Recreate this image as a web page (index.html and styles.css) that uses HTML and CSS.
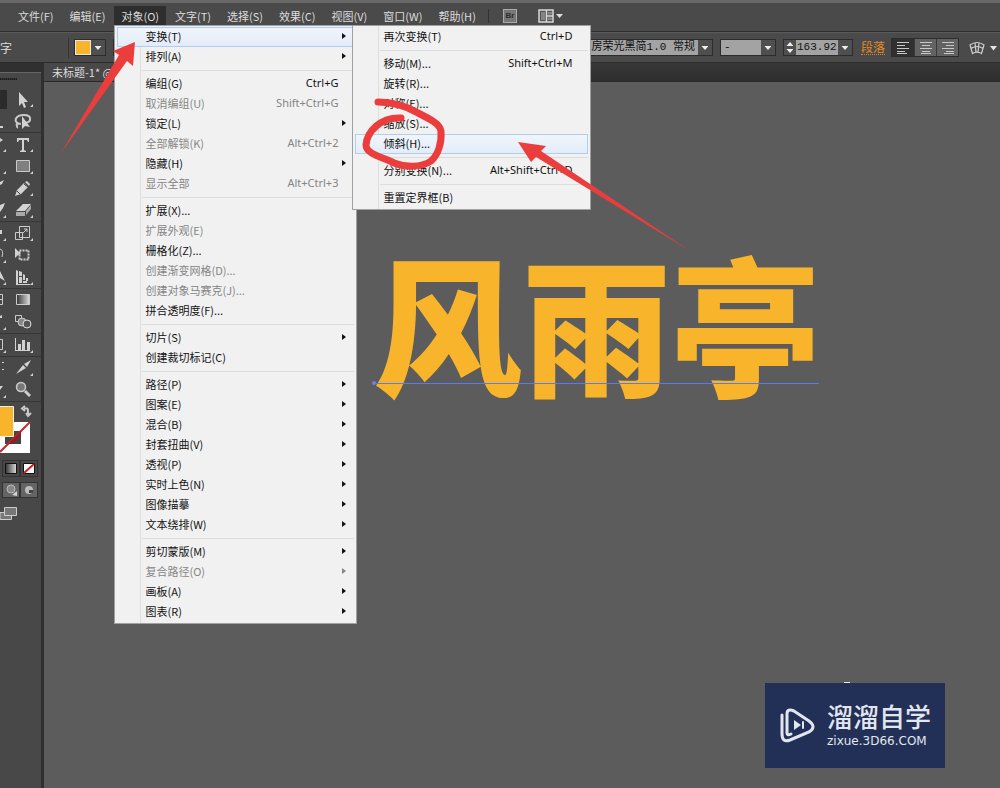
FILE: index.html
```html
<!DOCTYPE html>
<html lang="zh-CN">
<head>
<meta charset="utf-8">
<title>未标题-1</title>
<link rel="stylesheet" href="styles.css">
</head>
<body>
<header class="menubar">
  <nav class="menus">
    <button>文件(F)</button><button>编辑(E)</button>
    <div class="menu-root">
      <button class="open">对象(O)</button>
      <div class="menu object-menu">
        <button class="item active">变换(T)<i class="sub"></i></button>
        <button class="item">排列(A)<i class="sub"></i></button>
        <hr>
        <button class="item">编组(G)<kbd>Ctrl+G</kbd></button>
        <button class="item" disabled>取消编组(U)<kbd>Shift+Ctrl+G</kbd></button>
        <button class="item">锁定(L)<i class="sub"></i></button>
        <button class="item" disabled>全部解锁(K)<kbd>Alt+Ctrl+2</kbd></button>
        <button class="item">隐藏(H)<i class="sub"></i></button>
        <button class="item" disabled>显示全部<kbd>Alt+Ctrl+3</kbd></button>
        <hr>
        <button class="item">扩展(X)...</button>
        <button class="item" disabled>扩展外观(E)</button>
        <button class="item">栅格化(Z)...</button>
        <button class="item" disabled>创建渐变网格(D)...</button>
        <button class="item" disabled>创建对象马赛克(J)...</button>
        <button class="item">拼合透明度(F)...</button>
        <hr>
        <button class="item">切片(S)<i class="sub"></i></button>
        <button class="item">创建裁切标记(C)</button>
        <hr>
        <button class="item">路径(P)<i class="sub"></i></button>
        <button class="item">图案(E)<i class="sub"></i></button>
        <button class="item">混合(B)<i class="sub"></i></button>
        <button class="item">封套扭曲(V)<i class="sub"></i></button>
        <button class="item">透视(P)<i class="sub"></i></button>
        <button class="item">实时上色(N)<i class="sub"></i></button>
        <button class="item">图像描摹<i class="sub"></i></button>
        <button class="item">文本绕排(W)<i class="sub"></i></button>
        <hr>
        <button class="item">剪切蒙版(M)<i class="sub"></i></button>
        <button class="item" disabled>复合路径(O)<i class="sub"></i></button>
        <button class="item">画板(A)<i class="sub"></i></button>
        <button class="item">图表(R)<i class="sub"></i></button>
      </div>
      <div class="menu transform-menu">
        <button class="item">再次变换(T)<kbd>Ctrl+D</kbd></button>
        <hr>
        <button class="item">移动(M)...<kbd>Shift+Ctrl+M</kbd></button>
        <button class="item">旋转(R)...</button>
        <button class="item">对称(E)...</button>
        <button class="item">缩放(S)...</button>
        <button class="item active">倾斜(H)...</button>
        <hr>
        <button class="item">分别变换(N)...<kbd>Alt+Shift+Ctrl+D</kbd></button>
        <hr>
        <button class="item">重置定界框(B)</button>
      </div>
    </div>
    <button>文字(T)</button><button>选择(S)</button><button>效果(C)</button><button>视图(V)</button><button>窗口(W)</button><button>帮助(H)</button>
  </nav>
  <div class="app-tools">
    <span class="bridge">Br</span>
    <svg width="25" height="14" viewBox="0 0 25 14"><path d="M1 1h14v12H1z" fill="#555" stroke="#d8d8d8" stroke-width="1.5"/><path d="M8.500 1v12M9 7h6" stroke="#d8d8d8" stroke-width="1.500"/><path d="M3 3h4v8H3zM10 3h4v2.500h-4zM10 8.500h4V11h-4z" fill="#858585"/><path d="M18 5h7l-3.500 4z" fill="#ddd"/></svg>
  </div>
</header>

<div class="control-bar">
  <span class="kind">字</span>
  <span class="divider"></span>
  <button class="fill-pick" aria-label="填色"><span class="chip"></span><i class="arrow"></i></button>
  <div class="pick font-pick"><select aria-label="字体"><option>工房荣光黑简1.0 常规</option></select><i class="arrow"></i></div>
  <div class="pick style-pick"><select aria-label="样式"><option>-</option></select><i class="arrow"></i></div>
  <div class="pick size-pick"><i class="spin"></i><input aria-label="字号" value="163.92"><i class="arrow"></i></div>
  <a class="para" href="#">段落</a>
  <div class="aligns">
    <button class="on" aria-label="左对齐"><svg width="14" height="12"><path d="M1 .5h12M1 3.500h8M1 6.500h12M1 9.500h8M1 11.500h10"/></svg></button>
    <button aria-label="居中"><svg width="14" height="12"><path d="M1 .5h12M3 3.500h8M1 6.500h12M3 9.500h8M2 11.500h10"/></svg></button>
    <button aria-label="右对齐"><svg width="14" height="12"><path d="M1 .5h12M5 3.500h8M1 6.500h12M5 9.500h8M3 11.500h10"/></svg></button>
  </div>
  <button class="envelope" aria-label="变形"><svg width="28" height="14" viewBox="0 0 28 14"><path d="M1 4Q8 -1 15 4L12.500 12.500Q8 10 3.500 12.500zM2 7.500Q8 3.500 14 7.500M6 2l1 9M10 2l-1 9" fill="none" stroke="#d0d0d0" stroke-width="1.200"/><path d="M21 5h7l-3.500 4.500z" fill="#e4e4e4"/></svg></button>
</div>

<main class="workspace">
  <aside class="tools">
    <div class="panel-head"></div>
    <div class="grip"></div>
    <button aria-label="选择"><svg viewBox="0 0 40 22"><path d="M0 2h7v19H0z" fill="#2b2b2b"/><path class="g" d="M19 4v14l3-3 2 5 2-1-2-5h4zM33 16v3h-3z"/></svg></button>
    <button aria-label="套索"><svg viewBox="0 0 40 22"><path class="o wide" d="M21 14c-9-1-6-9 3-9 8 0 8 7 1 8M18 13c-3 1 0 4-1 5"/><path class="g" d="M22 6v13l3-3 5 1zM0 16h3v2H0z"/></svg></button>
    <hr>
    <button aria-label="文字"><svg viewBox="0 0 40 22"><path class="g" d="M17 5h12v4h-1l-1-2h-3v10l2 1v1h-6v-1l2-1V7h-3l-1 2h-1zM33 16v3h-3zM6 16v3H3zM0 5l3 2-3 2z"/></svg></button>
    <button aria-label="矩形"><svg viewBox="0 0 40 22"><path d="M16.500 5.500h13v11h-13z" fill="#808080" stroke="#c8c8c8"/><path class="g" d="M33 16v3h-3zM6 16v3H3z"/></svg></button>
    <button aria-label="铅笔"><svg viewBox="0 0 40 22"><path class="g" d="M15 19l2-6 7-7 4 4-7 7zM25 5l2-1 3 3-1 2zM33 16v3h-3zM0 5l4-2-2 4-2 1z"/><path d="M17 14l3 3M24 7l4 3" stroke="#444"/></svg></button>
    <button aria-label="橡皮擦"><svg viewBox="0 0 40 22"><path class="g" d="M16 12l7-7h8l-6 7z"/><path d="M16 13h9v4h-9zM26 12l5-6v4l-5 6z" fill="#aaa"/><path class="g" d="M33 16v3h-3zM6 16v3H3zM0 6l5-2-2 5-3 4z"/></svg></button>
    <hr>
    <button aria-label="比例缩放"><svg viewBox="0 0 40 22"><path class="o" d="M19.500 4.500h10v11h-10zM15.500 10.500h7v7h-7zM22 12l5-5M24 7h3v3"/><path class="g" d="M33 16v3h-3zM6 16v3H3zM0 8h2v4H0z"/></svg></button>
    <button aria-label="自由变换"><svg viewBox="0 0 40 22"><path d="M19.500 6.500h9v9h-9z" fill="none" stroke="#ccc" stroke-width="2" stroke-dasharray="2 1"/><path class="g" d="M15 4v10l3-3 3-1zM6 16v3H3z"/><path class="o" d="M0 5q4 1 2 8"/></svg></button>
    <button aria-label="透视网格"><svg viewBox="0 0 40 22"><path class="g" d="M16 4l2 1v13h-2zM19 5l3 1v4h-3zM19 11h3v6h-3zM23 8l2 1v5h-2zM23 15h4v2h-4zM16 18h14v1H16zM26 12h2v3h-2zM33 16v3h-3zM6 16v3H3zM0 5l5 10-5-3z"/></svg></button>
    <hr>
    <button aria-label="渐变"><svg viewBox="0 0 40 22"><defs><linearGradient id="gr"><stop stop-color="#333"/><stop offset="1" stop-color="#ddd"/></linearGradient></defs><path d="M16.500 5.500h13v10h-13z" fill="url(#gr)" stroke="#ccc"/><path class="o" d="M0 5.500h2.500v10H0M0 10.500h3"/></svg></button>
    <button aria-label="混合"><svg viewBox="0 0 40 22"><path class="o" d="M15.500 4.500h6v6h-6z"/><circle cx="22" cy="11" r="4" fill="#888" stroke="#ccc"/><circle cx="27" cy="13" r="4" fill="#555" stroke="#ddd"/><path class="g" d="M6 16v3H3zM0 5l2-1v3H0z"/></svg></button>
    <hr>
    <button aria-label="图表"><svg viewBox="0 0 40 22"><path class="g" d="M15 4h1v12h14v1H15zM18 10h3v6h-3zM22 6h3v10h-3zM27 8h3v8h-3zM33 16v3h-3zM6 16v3H3z"/><path class="o" d="M0 5.500h2.500v10H0"/></svg></button>
    <hr>
    <button aria-label="切片"><svg viewBox="0 0 40 22"><path class="g" d="M16 17l7-9 3 3zM24 7l7-4-4 7zM33 16v3h-3zM2 5h2v1H2zM2 12h2v1H2z"/></svg></button>
    <button aria-label="缩放"><svg viewBox="0 0 40 22"><path d="M25 12l5 5" stroke="#ccc" stroke-width="3"/><circle cx="21" cy="8" r="4.500" fill="#777" stroke="#ccc" stroke-width="1.500"/><path class="g" d="M6 16v3H3zM0 7h3l-3 4z"/></svg></button>
    <hr>
    <svg class="swatches" viewBox="0 0 40 54"><path d="M0 20h30v31H0z" fill="#fff"/><path d="M5 29h16v13H5z" fill="#444"/><path d="M0 50L30 20" stroke="#c22a2e" stroke-width="2"/><path d="M8 42l13-13v5l-8 8z" fill="#8c2022"/><path d="M-5 4.500h18.500v30H-5z" fill="#f8b52b" stroke="#eee"/><path class="o wide" d="M24 6.500h3q1 0 1 3v3M25 4l-3 2.500L25 9M26 11l2 3 3-3"/></svg>
    <div class="modes"><button aria-label="渐变填色"><svg viewBox="0 0 16 15"><path d="M2.500 2.500h11v10h-11z" fill="url(#gr)" stroke="#111"/></svg></button><button aria-label="无填色"><svg viewBox="0 0 16 15"><path d="M2.500 2.500h11v10h-11z" fill="#fff" stroke="#111"/><path d="M3 12L13 3" stroke="#c22" stroke-width="2"/></svg></button></div>
    <div class="modes soft"><button aria-label="背面绘图"><svg viewBox="0 0 16 14"><circle cx="8" cy="6" r="4" fill="#888" stroke="#bbb"/><path class="g" d="M9 12l5-4v5z"/></svg></button><button aria-label="内部绘图"><svg viewBox="0 0 16 14"><circle cx="8" cy="7" r="4" fill="#bbb"/><path d="M8 7h4v3H8z" fill="#444"/></svg></button></div>
    <button class="screen" aria-label="屏幕模式"><svg viewBox="0 0 40 22"><path d="M0 10.500h11.500v7H0z" fill="#777" stroke="#ccc"/><path d="M4.500 5.500h12v8h-12z" fill="#777" stroke="#ccc"/></svg></button>
  </aside>
  <section class="document">
    <div class="tabs"><span class="tab">未标题-1* @</span></div>
    <div class="canvas">
      <h1 class="artwork">风雨亭</h1>
      <span class="baseline"></span>
      <span class="dot"></span>
      <div class="brand">
        <svg width="36" height="38" viewBox="0 0 36 38" fill="none" stroke="#e2e6ef" stroke-width="3" stroke-linecap="round"><path d="M2 8v19q0 9 8 6l19-8q8-5 0-11L14 4Q7 1 7 7v19q0 3 4 1"/><path d="M14 13l7 5-7 5z" fill="#e2e6ef" stroke="none"/><path d="M23 15v6" stroke-width="2"/></svg>
        <div class="brand-text"><strong>溜溜自学</strong><span>zixue.3D66.COM</span></div>
      </div>
    </div>
  </section>
</main>

<svg class="marks" width="700" height="260" viewBox="0 0 700 260">
  <path d="M61 153L119 55l-6-4 22-9-2 24-6-5z"/>
  <path d="M690 251L536 157l-5 5-13-20 28 4-5 5z"/>
  <path class="ring" d="M378 102C396 102 408 107 418 113C430 119 440 124 441 131C442 143 438 155 431 161C421 168 404 167 394 163C382 157 366 154 366 145C367 132 380 117 401 118"/>
</svg>
</body>
</html>
```
FILE: styles.css
```css
* { box-sizing: border-box; }
body {
  margin: 0;
  min-height: 100vh;
  display: flex;
  flex-direction: column;
  position: relative;
  overflow: hidden;
  background: #5c5c5c;
  color: #dcdcdc;
  font: 11px/20px "Noto Sans CJK SC", sans-serif;
}
button, select, input {
  margin: 0;
  padding: 0;
  border: 0;
  border-radius: 0;
  background: none;
  color: inherit;
  font: inherit;
  appearance: none;
}
svg { display: block; flex: none; }

.menubar {
  display: flex;
  align-items: center;
  height: 32px;
  padding: 0 0 2px 11px;
  border-top: 3px solid #686868;
  border-bottom: 1px solid #303030;
  background: #4a4a4a;
}
.menus { display: flex; gap: 2px; }
.menus > button, .menu-root > button { padding: 0 7px; height: 20px; white-space: nowrap; }
.menu-root { position: relative; }
.menu-root > .open { background: #2e2e2e; }
.app-tools {
  display: flex;
  align-items: center;
  gap: 21px;
  margin-left: 5px;
  padding-left: 14px;
  border-left: 1px solid #333;
}
.bridge {
  width: 14px;
  height: 14px;
  border: 1px solid #aaa;
  background: #777;
  color: #2b2b2b;
  font: bold 8px/12px "Liberation Sans", sans-serif;
  text-align: center;
}

.menu {
  position: absolute;
  top: 19px;
  z-index: 2;
  padding: 1px 2px;
  border: 1px solid #a0a0a0;
  background: linear-gradient(90deg, #f1f1f1 25px, #dedede 25px, #dedede 26px, #f1f1f1 26px);
  color: #111;
}
.object-menu { left: 0; width: 243px; }
.transform-menu { left: 238px; width: 239px; z-index: 3; }
.menu hr {
  height: 1px;
  margin: 3px 0 3px 25px;
  border: 0;
  background: #dcdcdc;
}
.item {
  display: flex;
  align-items: center;
  justify-content: space-between;
  width: 100%;
  height: 20px;
  padding: 0 15px 2px 27px;
  border: 1px solid transparent;
  white-space: nowrap;
}
.item:disabled { color: #858585; }
.item.active { border-color: #aecff0; background: linear-gradient(#f1f5fb, #e2ecf8); }
.item kbd { font: 11px/18px "Noto Sans", sans-serif; }
.sub {
  margin-right: -8px;
  border: 4px solid transparent;
  border-width: 3px 0 3px 4px;
  border-left-color: currentColor;
}

.control-bar {
  display: flex;
  align-items: center;
  height: 31px;
  padding-right: 3px;
  border-top: 1px solid #5a5a5a;
  border-bottom: 1px solid #2c2c2c;
  background: #4a4a4a;
}
.kind { width: 68px; font-size: 12px; }
.divider { width: 1px; height: 20px; margin-right: 5px; background: #333; }
.fill-pick { display: flex; height: 17px; border: 1px solid #2c2c2c; }
.chip { width: 16px; border: 1px solid #e8e8e8; background: #f8b52b; }
.arrow { flex: none; width: 14px; background: #4f4f4f; }
.arrow::after {
  content: "";
  display: block;
  width: 7px;
  height: 4px;
  margin: 6px auto 0;
  background: #eee;
  clip-path: polygon(0 0, 100% 0, 50% 100%);
}
.pick { display: flex; height: 17px; border: 1px solid #2c2c2c; }
.pick select, .pick input {
  flex: 1;
  min-width: 0;
  padding: 0 3px;
  background: #a3a3a3;
  color: #111;
  font: 11px/15px "Liberation Mono", "Noto Sans CJK SC", monospace;
}
.font-pick { flex: 1; margin-left: 7px; }
.font-pick select { text-align-last: right; }
.style-pick { width: 56px; margin-left: 7px; }
.size-pick { width: 70px; margin-left: 7px; }
.pick input { padding: 0 0 0 1px; }
.spin { width: 12px; background: #4f4f4f; }
.spin::before, .spin::after {
  content: "";
  display: block;
  width: 7px;
  height: 4px;
  margin: 2px auto 3px;
  background: #eee;
  clip-path: polygon(50% 0, 100% 100%, 0 100%);
}
.spin::after { clip-path: polygon(0 0, 100% 0, 50% 100%); }
.para {
  margin: 0 6px 0 8px;
  border-bottom: 1px dotted #d98324;
  color: #e08a28;
  font-size: 12px;
  line-height: 14px;
  text-decoration: none;
}
.aligns { display: flex; border: 1px solid #2c2c2c; }
.aligns button {
  display: grid;
  place-items: center;
  width: 22px;
  height: 17px;
  background: #636363;
}
.aligns button + button { border-left: 1px solid #3a3a3a; }
.aligns .on { background: #303030; }
.aligns path { stroke: #c8c8c8; }
.envelope { margin-left: 10px; }

.workspace { flex: 1; display: flex; }
.tools {
  flex: none;
  width: 44px;
  border-right: 3px solid #303030;
  background: #484848;
}
.panel-head { height: 10px; background: #303030; border-bottom: 1px solid #666; }
.grip {
  width: 17px;
  height: 2px;
  margin: 5px 0 8px;
  background: repeating-linear-gradient(90deg, #1e1e1e 0 1px, #333 1px 2px);
}
.tools > button { display: block; width: 40px; height: 22px; }
.tools svg { width: 100%; height: 100%; }
.tools hr { height: 1px; margin: 0; border: 0; background: #363636; }
.g { fill: #d2d2d2; }
.o { fill: none; stroke: #cacaca; }
.wide { stroke-width: 2; }
.tools .swatches { width: 40px; height: 54px; }
.modes { display: flex; width: 36px; height: 17px; margin: 4px 0 0 2px; }
.modes button { flex: 1; border: 1px solid #333; }
.modes.soft { height: 16px; margin-top: 5px; }
.modes.soft button { background: #646464; }
.tools .screen { margin-top: 4px; }

.document { flex: 1; display: flex; flex-direction: column; min-width: 0; }
.tabs {
  display: flex;
  height: 19px;
  border-bottom: 1px solid #2a2a2a;
  background: linear-gradient(#383838, #2e2e2e);
}
.tab { width: 220px; padding-left: 8px; background: #484848; line-height: 18px; }
.canvas { flex: 1; position: relative; background: #5c5c5c; }
.artwork {
  position: absolute;
  left: 329px;
  top: 163px;
  margin: 0;
  color: #f8b52b;
  font: 900 149px/150px "Noto Sans CJK SC", sans-serif;
  white-space: nowrap;
}
.baseline { position: absolute; left: 329px; top: 301px; width: 446px; height: 1px; background: #5c7bea; }
.dot { position: absolute; left: 328px; top: 299px; width: 4px; height: 4px; border-radius: 50%; background: #6c84e0; }
.brand {
  position: absolute;
  right: 55px;
  bottom: 20px;
  display: flex;
  align-items: center;
  gap: 11px;
  width: 180px;
  height: 85px;
  padding-left: 15px;
  background: #223057;
  color: #e2e6ef;
}
.brand::before {
  content: "";
  position: absolute;
  left: 79px;
  top: -1px;
  width: 6px;
  height: 1px;
  background: #eee;
}
.brand-text { display: flex; flex-direction: column; }
.brand-text strong { height: 30px; font-size: 26px; font-weight: 500; line-height: 24px; }
.brand-text span { font: 12px/14px "DejaVu Sans", sans-serif; }

.marks { position: absolute; left: 0; top: 0; z-index: 5; fill: #ec3d3d; pointer-events: none; }
.ring { fill: none; stroke: #ec3d3d; stroke-width: 7; stroke-linecap: round; stroke-linejoin: round; }
```
